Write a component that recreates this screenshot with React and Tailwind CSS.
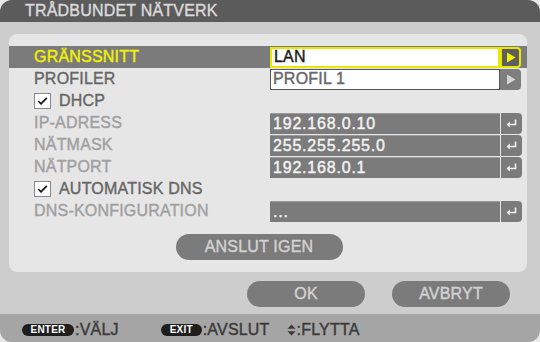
import React from "react";

const rows = [
  { label: "GRÄNSSNITT", kind: "select", value: "LAN", active: true },
  { label: "PROFILER", kind: "select", value: "PROFIL 1" },
  { label: "DHCP", kind: "check" },
  { label: "IP-ADRESS", kind: "field", value: "192.168.0.10", dim: true },
  { label: "NÄTMASK", kind: "field", value: "255.255.255.0", dim: true },
  { label: "NÄTPORT", kind: "field", value: "192.168.0.1", dim: true },
  { label: "AUTOMATISK DNS", kind: "check" },
  { label: "DNS-KONFIGURATION", kind: "field", value: "...", dim: true },
];

const Arrow = ({ color }) => (
  <svg width="10" height="11" viewBox="0 0 10 11">
    <path d="M1 0.5 L9.5 5.5 L1 10.5 Z" fill={color} />
  </svg>
);

const EnterIcon = () => (
  <svg width="11" height="9" viewBox="0 0 11 9">
    <path d="M9.5 0.5 V5.5 H2.5" stroke="#f2f2f2" strokeWidth="1.6" fill="none" />
    <path d="M0.5 5.5 L3.8 2.6 V8.4 Z" fill="#f2f2f2" />
  </svg>
);

const UpDown = () => (
  <svg width="9" height="12" viewBox="0 0 9 12" className="mr-[1px]">
    <path d="M4.5 0.5 L8.5 4.8 H0.5 Z" fill="#3a3a3a" />
    <path d="M4.5 11.5 L8.5 7.2 H0.5 Z" fill="#3a3a3a" />
  </svg>
);

const CheckBox = () => (
  <div className="w-[17px] h-[16px] shrink-0 bg-white border border-[#8a8a8a] flex items-center justify-center">
    <svg width="11" height="10" viewBox="0 0 11 10">
      <path d="M1.2 5 L4 7.8 L9.8 1.8" stroke="#111" strokeWidth="1.7" fill="none" />
    </svg>
  </div>
);

const Row = ({ row }) => {
  const labelColor = row.active
    ? "text-[#f2f200]"
    : row.dim
      ? "text-[#a0a0a0]"
      : "text-[#666]";

  return (
    <div
      className={
        "h-[22px] flex items-center pr-[6px] " +
        (row.active ? "bg-[#7b7b7b]" : "")
      }
    >
      <div className="w-[261px] shrink-0 pl-[25px] flex items-center">
        {row.kind === "check" ? (
          <>
            <CheckBox />
            <span className="ml-[8px] text-[#666]">{row.label}</span>
          </>
        ) : (
          <span className={labelColor}>{row.label}</span>
        )}
      </div>

      {row.kind === "select" && (
        <div className="flex h-[21px] shrink-0">
          <div
            className={
              "w-[230px] bg-white pl-[2px] flex items-center " +
              (row.active
                ? "border-2 border-[#e8e800] text-[#1a1a1a]"
                : "border border-[#555] text-[#666]")
            }
          >
            {row.value}
          </div>
          <div
            className={
              "w-[21px] rounded-r-[4px] flex items-center justify-center " +
              (row.active
                ? "bg-[#5e5e5e] border-2 border-[#e8e800]"
                : "bg-[#7e7e7e]")
            }
          >
            <Arrow color={row.active ? "#f2f200" : "#d4d4d4"} />
          </div>
        </div>
      )}

      {row.kind === "field" && (
        <div className="flex h-[21px] shrink-0">
          <div className="w-[230px] bg-[#7b7b7b] border-t border-[#9a9a9a] pl-[3px] flex items-center text-[#f4f4f4] tracking-[0.8px]">
            {row.value}
          </div>
          <div className="w-[21px] ml-px bg-[#7b7b7b] rounded-r-[4px] flex items-center justify-center">
            <EnterIcon />
          </div>
        </div>
      )}
    </div>
  );
};

const Pill = ({ children, width }) => (
  <span
    className={
      "h-[12px] rounded-full bg-[#1e1e1e] text-white text-[10px] font-bold flex items-center justify-center leading-none [-webkit-text-stroke:0px] " +
      width
    }
  >
    {children}
  </span>
);

export default function App() {
  return (
    <div className="w-[540px] h-[342px] bg-[#e8e8e8]">
      <div className="w-[540px] h-[342px] rounded-[12px] overflow-hidden bg-[#cdcdcd] flex flex-col font-['Liberation_Sans',Arial,sans-serif] text-[16px] tracking-[0.2px] leading-none [-webkit-text-stroke:0.4px_currentColor]">
        {/* Title */}
        <div className="h-[22px] bg-[#5b5b5b] pl-[25px] flex items-center text-[#dadada]">
          TRÅDBUNDET NÄTVERK
        </div>

        {/* Body */}
        <div className="flex-1 pl-[9px] pr-[13px] pt-[12px]">
          <div className="h-[238px] bg-[#e6e6e6] rounded-[8px] pt-[12px]">
            {rows.map((row) => (
              <Row key={row.label} row={row} />
            ))}
            <div className="flex justify-center mt-[12px]">
              <button className="w-[167px] h-[26px] mr-[18px] rounded-full bg-[#7b7b7b] text-[#d2d2d2] flex items-center justify-center">
                ANSLUT IGEN
              </button>
            </div>
          </div>

          <div className="flex justify-end gap-[27px] mt-[9px] pr-[17px]">
            <button className="w-[118px] h-[26px] rounded-full bg-[#7b7b7b] text-[#d2d2d2] flex items-center justify-center">
              OK
            </button>
            <button className="w-[118px] h-[26px] rounded-full bg-[#7b7b7b] text-[#d2d2d2] flex items-center justify-center">
              AVBRYT
            </button>
          </div>
        </div>

        {/* Footer */}
        <div className="h-[28px] bg-[#a5a5a5] flex items-center pl-[22px] pt-[4px] text-[#3a3a3a]">
          <Pill width="w-[52px]">ENTER</Pill>
          <span className="ml-[1px]">:VÄLJ</span>
          <div className="ml-[42px] flex items-center">
            <Pill width="w-[41px]">EXIT</Pill>
            <span className="ml-[1px]">:AVSLUT</span>
          </div>
          <div className="ml-[17px] flex items-center">
            <UpDown />
            <span>:FLYTTA</span>
          </div>
        </div>
      </div>
    </div>
  );
}
